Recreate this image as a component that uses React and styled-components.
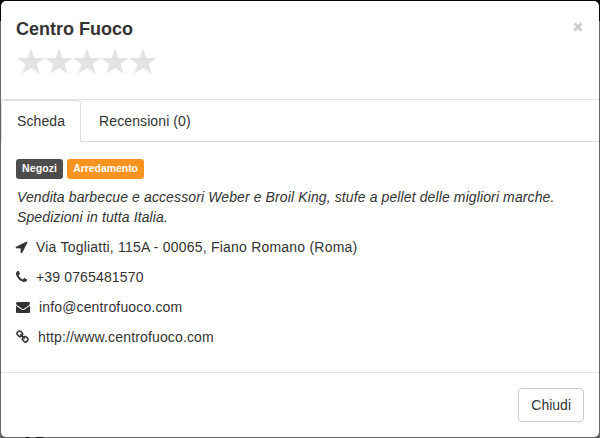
import React from "react";
import styled, { createGlobalStyle } from "styled-components";

const GlobalStyle = createGlobalStyle`
  * {
    box-sizing: border-box;
  }
  body {
    margin: 0;
    overflow: hidden;
    font-family: "Liberation Sans", Arial, sans-serif;
    font-size: 14px;
    line-height: 20px;
    color: #333;
  }
`;

const Backdrop = styled.div`
  position: relative;
  height: 438px;
  padding: 1px;
  background: linear-gradient(#09060b 21px, #666 21px);
`;

const PageText = styled.div`
  position: absolute;
  left: 25px;
  bottom: 0;
  display: flex;
  gap: 7px;
  span {
    width: 4px;
    height: 1px;
    background-color: #161616;
  }
  span + span {
    width: 7px;
  }
`;

const Modal = styled.div`
  display: flex;
  flex-direction: column;
  height: 436px;
  border-radius: 5px;
  background-color: #fff;
`;

const Header = styled.div`
  display: flex;
  justify-content: space-between;
  align-items: flex-start;
  height: 99px;
  padding: 15px;
  border-bottom: 1px solid #e5e5e5;
`;

const Title = styled.h4`
  margin: 0;
  padding-top: 1px;
  font-size: 18px;
  font-weight: bold;
  line-height: 24px;
`;

const Stars = styled.div`
  display: flex;
  padding: 7px 0 0 1px;
  svg {
    display: block;
    width: 28px;
    height: 27px;
    fill: #e3e3e3;
  }
`;

const Close = styled.button`
  display: flex;
  padding: 6px 1px 0 0;
  border: 0;
  background: transparent;
  opacity: 0.2;
  cursor: pointer;
`;

const Tabs = styled.div`
  display: flex;
  gap: 2px;
  height: 42px;
  border-bottom: 1px solid #ddd;
`;

const Tab = styled.div`
  height: 42px;
  padding: 10px 15px;
  border: 1px solid ${(props) => (props.$active ? "#ddd" : "transparent")};
  border-bottom-color: ${(props) => (props.$active ? "#fff" : "transparent")};
  border-radius: 4px 4px 0 0;
  letter-spacing: 0.1px;
  cursor: pointer;
`;

const Body = styled.div`
  flex: 1;
  padding: 17px 15px 0;
`;

const Labels = styled.div`
  display: flex;
  gap: 4px;
  margin-bottom: 8px;
`;

const Label = styled.span`
  height: 20px;
  padding: 0 6px;
  border-radius: 3px;
  font-size: 10.5px;
  font-weight: bold;
  line-height: 19px;
  letter-spacing: ${(props) => props.$spacing || 0}px;
  color: #fff;
  background-color: ${(props) => props.$color};
`;

const Description = styled.p`
  margin: 0 0 10px;
  padding-left: 1px;
  font-style: italic;
  letter-spacing: 0.115px;
`;

const Row = styled.div`
  display: flex;
  align-items: center;
  gap: ${(props) => props.$gap || 9}px;
  margin-bottom: 10px;
  letter-spacing: ${(props) => props.$spacing || 0.15}px;
  svg {
    height: 14px;
    fill: #333;
    stroke: #333;
    stroke-width: ${(props) => props.$stroke || 0};
  }
`;

const Footer = styled.div`
  display: flex;
  justify-content: flex-end;
  height: 65px;
  padding: 15px 15px 0 0;
  border-top: 1px solid #e5e5e5;
`;

const Button = styled.button`
  height: 34px;
  padding: 0 12px;
  border: 1px solid #ccc;
  border-radius: 4px;
  background-color: #fff;
  font: inherit;
  color: #333;
  cursor: pointer;
`;

// 1792 units per em, x is where the glyph starts
const icons = {
  location: {
    x: 192,
    width: 1408,
    d: "M1593 349l-640 1280q-17 35-57 35-5 0-15-2-22-5-35.5-22.5t-13.5-39.5v-576h-576q-22 0-39.5-13.5t-22.5-35.5 4-42 29-30l1280-640q13-7 29-7 27 0 45 19 15 14 18.5 34.5t-6.5 39.5z",
  },
  phone: {
    x: 192,
    width: 1408,
    d: "M1600 1240q0 27-10 70.5t-21 68.5q-21 50-122 106-94 51-186 51-27 0-52.5-3.5t-57.5-12.5-47.5-14.5-55.5-20.5-49-18q-98-35-175-83-128-79-264.5-215.5t-215.5-264.5q-48-77-83-175-3-9-18-49t-20.5-55.5-14.5-47.5-12.5-57.5-3.5-52.5q0-92 51-186 56-101 106-122 25-11 68.5-21t70.5-10q14 0 21 3 18 6 53 76 11 19 30 54t35 63.5 31 53.5q3 4 17.5 25t21.5 35.5 7 28.5q0 20-28.5 50t-62 55-62 53-28.5 46q0 9 5 22.5t8.5 20.5 14 24 11.5 19q76 137 174 235t235 174q2 1 19 11.5t24 14 20.5 8.5 22.5 5q18 0 46-28.5t53-62 55-62 50-28.5q14 0 28.5 7t35.5 21.5 25 17.5q25 15 53.5 31t63.5 35 54 30q70 35 76 53 3 7 3 21z",
  },
  envelope: {
    x: 0,
    width: 1792,
    d: "M1792 710v794q0 66-47 113t-113 47h-1472q-66 0-113-47t-47-113v-794q44 49 101 87 362 246 497 345 57 42 92.5 65.5t94.5 48 110 24.5h2q51 0 110-24.5t94.5-48 92.5-65.5q170-123 498-345 57-39 100-87zm0-294q0 79-49 151t-122 123q-376 261-468 325-10 7-42.5 31t-54 38.5-52 32.5-57.5 27-50 9h-2q-23 0-50-9t-57.5-27-52-32.5-54-38.5-42.5-31q-91-64-262-182.5t-205-142.5q-62-42-117-115.5t-55-136.5q0-78 41.5-130t118.5-52h1472q65 0 112.5 47t47.5 113z",
  },
  link: {
    x: 64,
    width: 1664,
    d: "M1520 1216q0-40-28-68l-208-208q-28-28-68-28-42 0-72 32 3 3 19 18.5t21.5 21.5 15 19 13 25.5 3.5 27.5q0 40-28 68t-68 28q-15 0-27.5-3.5t-25.5-13-19-15-21.5-21.5-18.5-19q-33 31-33 73 0 40 28 68l206 207q27 27 68 27 40 0 68-26l147-146q28-28 28-67zm-703-705q0-40-28-68l-206-207q-28-28-68-28-39 0-68 27l-147 146q-28 28-28 67 0 40 28 68l208 208q27 27 68 27 42 0 72-31-3-3-19-18.5t-21.5-21.5-15-19-13-25.5-3.5-27.5q0-40 28-68t68-28q15 0 27.5 3.5t25.5 13 19 15 21.5 21.5 18.5 19q33-31 33-73zm895 705q0 120-85 203l-147 146q-83 83-203 83-121 0-204-85l-206-207q-83-83-83-203 0-123 88-209l-88-88q-86 88-208 88-120 0-204-84l-208-208q-84-84-84-204t85-203l147-146q83-83 203-83 121 0 204 85l206 207q83 83 83 203 0 123-88 209l88 88q86-88 208-88 120 0 204 84l208 208q84 84 84 204z",
  },
};

function Icon({ name }) {
  const { x, width, d } = icons[name];
  return (
    <svg width={width / 128} viewBox={`${x} 0 ${width} 1792`} overflow='visible'>
      <path d={d} />
    </svg>
  );
}

function Star() {
  return (
    <svg viewBox="0 0 28 27">
      <path d="M14 0.2L17.3 9.9H27.8L19.5 16.1L22.8 25.7L14 19.9L5.2 25.7L8.5 16.1L0.2 9.9H10.7Z" />
    </svg>
  );
}

export default function App() {
  return (
    <Backdrop>
      <GlobalStyle />
      <Modal>
        <Header>
          <div>
            <Title>Centro Fuoco</Title>
            <Stars>
              {[1, 2, 3, 4, 5].map((n) => (
                <Star key={n} />
              ))}
            </Stars>
          </div>
          <Close aria-label='Chiudi'>
            <svg width='10' height='10' viewBox='0 0 10 10'>
              <path d='M1.5 1.5L8.5 8.5M8.5 1.5L1.5 8.5' stroke='#000' strokeWidth='2.9' />
            </svg>
          </Close>
        </Header>
        <Tabs>
          <Tab $active>Scheda</Tab>
          <Tab>Recensioni (0)</Tab>
        </Tabs>
        <Body>
          <Labels>
            <Label $color='#4d4d4d' $spacing={0.12}>Negozi</Label>
            <Label $color='#f7931e' $spacing={-0.05}>Arredamento</Label>
          </Labels>
          <Description>
            Vendita barbecue e accessori Weber e Broil King, stufe a pellet
            delle migliori marche. Spedizioni in tutta Italia.
          </Description>
          <Row $spacing={0.21} $stroke={90}>
            <Icon name='location' />
            <span>Via Togliatti, 115A - 00065, Fiano Romano (Roma)</span>
          </Row>
          <Row>
            <Icon name='phone' />
            <span>+39 0765481570</span>
          </Row>
          <Row>
            <Icon name='envelope' />
            <span>info@centrofuoco.com</span>
          </Row>
          <Row $stroke={20}>
            <Icon name='link' />
            <span>http://www.centrofuoco.com</span>
          </Row>
        </Body>
        <Footer>
          <Button>Chiudi</Button>
        </Footer>
      </Modal>
      <PageText>
        <span />
        <span />
      </PageText>
    </Backdrop>
  );
}
